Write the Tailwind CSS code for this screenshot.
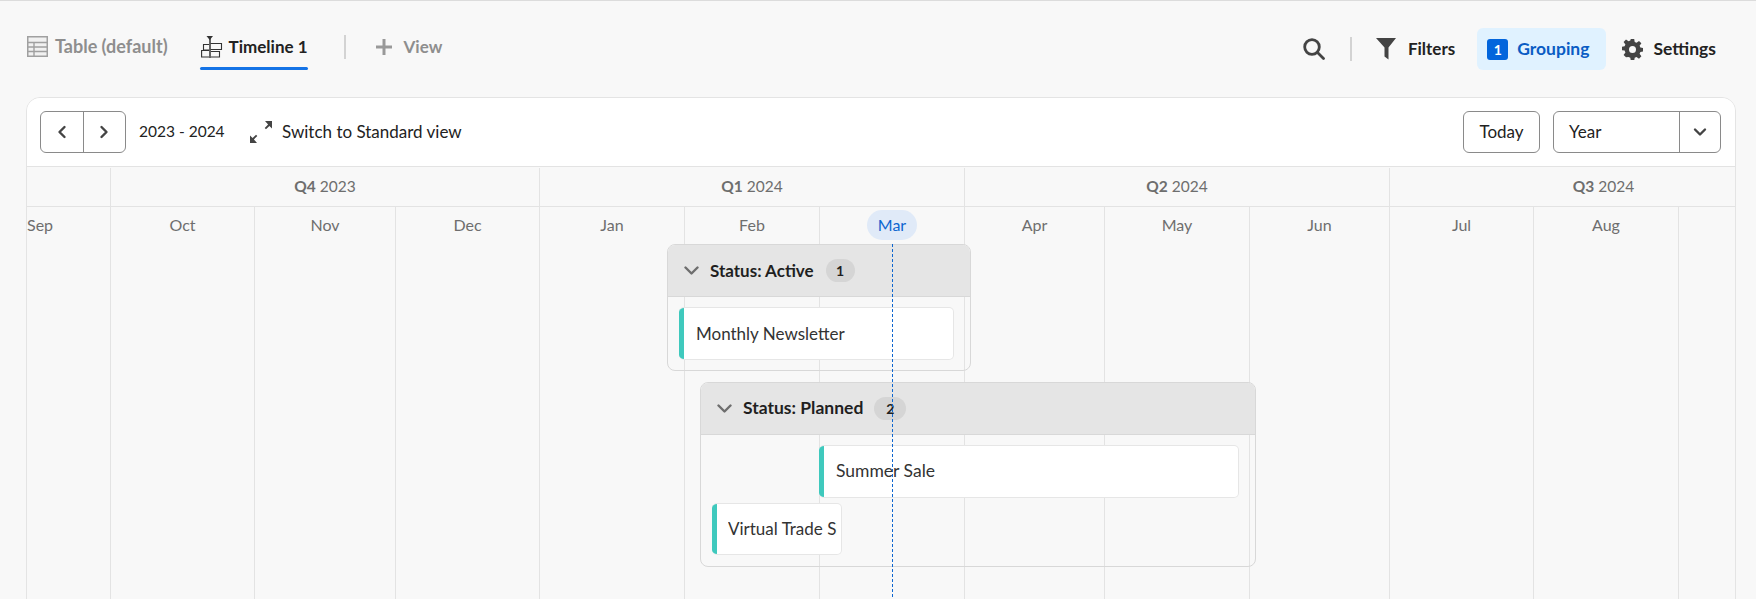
<!DOCTYPE html>
<html>
<head>
<meta charset="utf-8">
<script src="https://cdn.jsdelivr.net/npm/@tailwindcss/browser@4"></script>
</head>
<body class="h-[599px] overflow-hidden bg-[#f8f8f8] font-['Lato','Noto_Sans',sans-serif] text-[17px] text-[#222]">
<div class="border-t border-[#dcdcdc] h-[2px]"></div>
<header class="flex items-center justify-between h-[95px] pl-[27px] pr-[40px]">
  <nav class="flex items-center h-[42px] mt-[-6px]">
    <div class="flex items-center gap-[7px] text-[#8e8e8e] font-bold">
      <svg class="w-[21px] h-[21px]" viewBox="0 0 21 21" fill="none" stroke="#a0a0a0" stroke-width="1.4"><rect x=".7" y=".7" width="19.6" height="19.6" fill="#f1f1f1" stroke-width="1.6"/><path d="M.7 6.5h19.6M.7 11h19.6M.7 15.5h19.6M7 6.5v14"/></svg>
      <span class="text-[18px]">Table (default)</span>
    </div>
    <div class="relative flex items-center gap-[6px] ml-[32px] pl-[1px] font-bold text-[#222] h-[42px]">
      <svg class="w-[22px] h-[22px]" viewBox="0 0 22 22" fill="none" stroke="#333" stroke-width="1.100"><path d="M5.500 0H12L8.750 4z" fill="#333" stroke="none"/><path d="M9 2v20" stroke-width="1.500"/><path d="M9.500 7.500h11v6h-11M10 15.500h8.500v5.500H10M8 8.500H2.500V14H8M8 14.500H.6v6.500H8"/></svg>
      <span>Timeline 1</span>
      <div class="absolute left-0 right-0 bottom-[-2px] h-[3px] rounded-full bg-[#1473e6]"></div>
    </div>
    <div class="w-[2px] h-[24px] bg-[#d3d3d3] ml-[36px]"></div>
    <div class="flex items-center gap-[11px] ml-[29px] text-[#8e8e8e] font-bold">
      <svg class="w-[18px] h-[18px]" viewBox="0 0 18 18" fill="#999"><path d="M7.500 1h3v6.500H17v3h-6.500V17h-3v-6.500H1v-3h6.500z"/></svg>
      <span>View</span>
    </div>
  </nav>
  <div class="flex items-center mt-[-1px]">
    <svg class="w-[22px] h-[22px]" viewBox="0 0 22 22" fill="none" stroke="#444" stroke-width="2.800"><circle cx="9" cy="9" r="7.300"/><path d="M14.500 14.500L20.500 20.500" stroke-linecap="round"/></svg>
    <div class="w-[2px] h-[24px] bg-[#d3d3d3] ml-[25px]"></div>
    <div class="flex items-center gap-[12px] ml-[24px] font-bold">
      <svg class="w-[20px] h-[22px]" viewBox="0 0 20 22" fill="#444"><path d="M0 0h20l-7.500 9.500V21.500l-4-3V9.500z"/></svg>
      <span>Filters</span>
    </div>
    <div class="flex items-center gap-[9px] ml-[22px] h-[42px] pl-[10px] pr-[17px] rounded-[6px] bg-[#e0f2ff] font-bold text-[#0a5cc4]">
      <span class="flex items-center justify-center w-[21px] h-[21px] rounded-[3px] bg-[#0265dc] text-white text-[14px]">1</span>
      <span class="text-[17.500px]">Grouping</span>
    </div>
    <div class="flex items-center gap-[10px] ml-[16px] font-bold">
      <svg class="w-[21px] h-[21px]" viewBox="0 0 21 21"><path fill="#444" fill-rule="evenodd" d="M8.800 0h3.400l.5 3 1.800.8 2.500-1.800 2.400 2.400-1.800 2.500.8 1.800 3 .5v3.400l-3 .5-.8 1.800 1.800 2.500-2.400 2.400-2.500-1.800-1.800.8-.5 3H8.800l-.5-3-1.800-.8L4 18.400 1.600 16l1.800-2.500-.8-1.800-3-.5V7.800l3-.5.8-1.800L1.600 3 4 .6l2.500 1.800 1.800-.8zM10.500 7a3.500 3.500 0 100 7 3.500 3.500 0 000-7z" transform="translate(0 -.1)"/></svg>
      <span class="text-[17.500px]">Settings</span>
    </div>
  </div>
</header>
<main class="ml-[26px] w-[1710px] h-[600px] border border-[#e4e4e4] rounded-t-[14px] overflow-hidden">
  <div class="flex items-center justify-between h-[69px] pl-[13px] pr-[14px] bg-white border-b border-[#e3e3e3]">
    <div class="flex items-center">
      <div class="flex w-[86px] h-[42px] border border-[#8a8a8a] rounded-[6px]">
        <button class="flex-1 flex items-center justify-center border-r border-[#8a8a8a]">
          <svg class="w-[10px] h-[14px]" viewBox="0 0 10 14" fill="none" stroke="#444" stroke-width="2.400" stroke-linecap="round" stroke-linejoin="round"><path d="M7.500 2L2.500 7l5 5"/></svg>
        </button>
        <button class="flex-1 flex items-center justify-center">
          <svg class="w-[10px] h-[14px]" viewBox="0 0 10 14" fill="none" stroke="#444" stroke-width="2.400" stroke-linecap="round" stroke-linejoin="round"><path d="M2.500 2l5 5-5 5"/></svg>
        </button>
      </div>
      <span class="ml-[13px] w-[87px] text-[15.500px] whitespace-nowrap">2023 - 2024</span>
      <svg class="ml-[24px] w-[22px] h-[22px]" viewBox="0 0 22 22" fill="#444"><path d="M22 0v7.500l-2.600-2.600-3.400 3.400-1.300-1.300 3.400-3.400L15 0zM0 22v-7.500l2.600 2.600 3.400-3.400 1.300 1.300-3.400 3.400L7 22z"/></svg>
      <span class="ml-[10px]">Switch to Standard view</span>
    </div>
    <div class="flex items-center">
      <button class="w-[77px] h-[42px] border border-[#8a8a8a] rounded-[6px]">Today</button>
      <div class="flex ml-[13px] w-[168px] h-[42px] border border-[#8a8a8a] rounded-[6px]">
        <span class="flex-1 flex items-center pl-[15px]">Year</span>
        <span class="flex items-center justify-center w-[41px] border-l border-[#8a8a8a]">
          <svg class="w-[14px] h-[10px]" viewBox="0 0 14 10" fill="none" stroke="#444" stroke-width="2.400" stroke-linecap="round" stroke-linejoin="round"><path d="M2 2.500l5 5 5-5"/></svg>
        </span>
      </div>
    </div>
  </div>
  <div class="flex h-[40px] pt-[1px] border-b border-[#e3e3e3] text-[#6e6e6e] text-[15.500px]">
    <div class="w-[83px] shrink-0"></div>
    <div class="w-[429px] shrink-0 border-l border-[#e3e3e3] flex items-center justify-center gap-[4px]"><b>Q4</b>2023</div>
    <div class="w-[425px] shrink-0 border-l border-[#e3e3e3] flex items-center justify-center gap-[4px]"><b>Q1</b>2024</div>
    <div class="w-[425px] shrink-0 border-l border-[#e3e3e3] flex items-center justify-center gap-[4px]"><b>Q2</b>2024</div>
    <div class="w-[428px] shrink-0 border-l border-[#e3e3e3] flex items-center justify-center gap-[4px]"><b>Q3</b>2024</div>
  </div>
  <div class="relative h-[400px] text-[#6e6e6e] text-[16px]">
    <div class="flex h-full">
      <div class="w-[83px] shrink-0 pt-[6px]">Sep</div>
      <div class="w-[144px] shrink-0 pt-[6px] border-l border-[#e3e3e3] text-center">Oct</div>
      <div class="w-[141px] shrink-0 pt-[6px] border-l border-[#e3e3e3] text-center">Nov</div>
      <div class="w-[144px] shrink-0 pt-[6px] border-l border-[#e3e3e3] text-center">Dec</div>
      <div class="w-[145px] shrink-0 pt-[6px] border-l border-[#e3e3e3] text-center">Jan</div>
      <div class="w-[135px] shrink-0 pt-[6px] border-l border-[#e3e3e3] text-center">Feb</div>
      <div class="w-[145px] shrink-0 pt-[3px] border-l border-[#e3e3e3] flex justify-center items-start">
        <span class="flex items-center justify-center w-[50px] h-[30px] rounded-full bg-[#e0eaf8] text-[#0d66d0]">Mar</span>
      </div>
      <div class="w-[140px] shrink-0 pt-[6px] border-l border-[#e3e3e3] text-center">Apr</div>
      <div class="w-[145px] shrink-0 pt-[6px] border-l border-[#e3e3e3] text-center">May</div>
      <div class="w-[140px] shrink-0 pt-[6px] border-l border-[#e3e3e3] text-center">Jun</div>
      <div class="w-[144px] shrink-0 pt-[6px] border-l border-[#e3e3e3] text-center">Jul</div>
      <div class="w-[145px] shrink-0 pt-[6px] border-l border-[#e3e3e3] text-center">Aug</div>
      <div class="w-[139px] shrink-0 border-l border-[#e3e3e3]"></div>
    </div>

    <!-- Status: Active -->
    <section class="absolute left-[640px] top-[37px] w-[304px] h-[127px] border border-[#d8d8d8] rounded-[8px] overflow-hidden text-[17px]">
      <div class="flex items-center h-[52px] bg-[#e5e5e5] border-b border-[#d8d8d8] pl-[16px] text-[#1f1f1f] font-bold">
        <svg class="w-[15px] h-[9px]" viewBox="0 0 15 9" fill="none" stroke="#6e6e6e" stroke-width="2.400" stroke-linecap="round" stroke-linejoin="round"><path d="M1.500 1.500l6 6 6-6"/></svg>
        <span class="ml-[11px]">Status: Active</span>
        <span class="ml-[12px] flex items-center justify-center w-[29px] h-[23px] rounded-full bg-[#d5d5d5] text-[14px]">1</span>
      </div>
      <div class="absolute left-[11px] top-[62px] w-[275px] h-[53px] flex bg-white border border-l-0 border-[#e6e6e6] rounded-[5px] overflow-hidden">
        <div class="w-[5px] bg-[#3fc9bd] shrink-0"></div>
        <div class="flex items-center pl-[12px] text-[#333]">Monthly Newsletter</div>
      </div>
    </section>

    <!-- Status: Planned -->
    <section class="absolute left-[673px] top-[175px] w-[556px] h-[185px] border border-[#d8d8d8] rounded-[8px] overflow-hidden text-[17px]">
      <div class="flex items-center h-[52px] bg-[#e5e5e5] border-b border-[#d8d8d8] pl-[16px] text-[#1f1f1f] font-bold">
        <svg class="w-[15px] h-[9px]" viewBox="0 0 15 9" fill="none" stroke="#6e6e6e" stroke-width="2.400" stroke-linecap="round" stroke-linejoin="round"><path d="M1.500 1.500l6 6 6-6"/></svg>
        <span class="ml-[11px] text-[17.500px]">Status: Planned</span>
        <span class="ml-[11px] flex items-center justify-center w-[32px] h-[23px] rounded-full bg-[#d5d5d5] text-[14px]">2</span>
      </div>
      <div class="absolute left-[118px] top-[62px] w-[420px] h-[53px] flex bg-white border border-l-0 border-[#e6e6e6] rounded-[5px] overflow-hidden">
        <div class="w-[5px] bg-[#3fc9bd] shrink-0"></div>
        <div class="flex items-center pl-[12px] text-[#333] text-[17.500px]">Summer Sale</div>
      </div>
      <div class="absolute left-[11px] top-[120px] w-[130px] h-[52px] flex bg-white border border-l-0 border-[#e6e6e6] rounded-[5px] overflow-hidden">
        <div class="w-[5px] bg-[#3fc9bd] shrink-0"></div>
        <div class="flex items-center ml-[11px] w-[109px] overflow-hidden whitespace-nowrap text-[#333]">Virtual Trade Show</div>
      </div>
    </section>

    <!-- Today line -->
    <div class="absolute left-[865px] top-[37px] bottom-0 border-l border-dashed border-[#0d66d0]"></div>
  </div>
</main>
</body>
</html>
